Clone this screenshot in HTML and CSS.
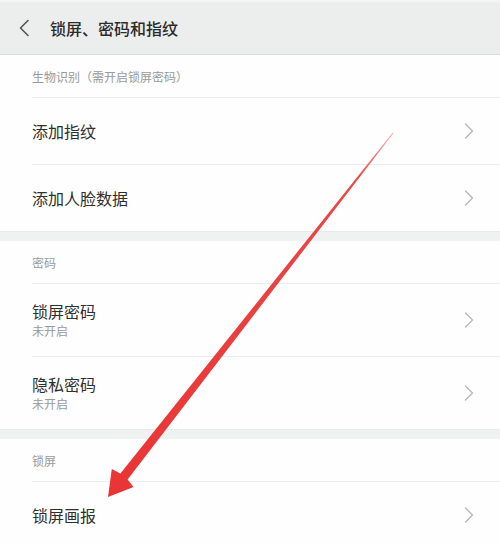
FILE: index.html
```html
<!DOCTYPE html>
<html lang="zh-CN">
<head>
<meta charset="utf-8">
<title>锁屏、密码和指纹</title>
<link rel="stylesheet" href="styles.css">
</head>
<body>
<div class="screen">
  <header class="topbar">
    <svg class="back" width="12" height="18" viewBox="0 0 12 18"><path d="M10 1.5 L2.5 9 L10 16.5" fill="none" stroke="#555" stroke-width="1.6" stroke-linecap="round" stroke-linejoin="round"/></svg>
    <span class="title">锁屏、密码和指纹</span>
  </header>

  <section class="section">
    <div class="sec-title">生物识别（需开启锁屏密码）</div>
    <div class="row">
      <div class="label"><div class="main">添加指纹</div></div>
      <svg class="chev" width="10" height="16" viewBox="0 0 10 16"><path d="M1.5 1 L8.5 8 L1.5 15" fill="none" stroke="#b8b8b8" stroke-width="1.4" stroke-linecap="round" stroke-linejoin="round"/></svg>
    </div>
    <div class="row last">
      <div class="label"><div class="main">添加人脸数据</div></div>
      <svg class="chev" width="10" height="16" viewBox="0 0 10 16"><path d="M1.5 1 L8.5 8 L1.5 15" fill="none" stroke="#b8b8b8" stroke-width="1.4" stroke-linecap="round" stroke-linejoin="round"/></svg>
    </div>
  </section>
  <div class="gap"></div>

  <section class="section">
    <div class="sec-title">密码</div>
    <div class="row tall">
      <div class="label"><div class="main">锁屏密码</div><div class="sub">未开启</div></div>
      <svg class="chev" width="10" height="16" viewBox="0 0 10 16"><path d="M1.5 1 L8.5 8 L1.5 15" fill="none" stroke="#b8b8b8" stroke-width="1.4" stroke-linecap="round" stroke-linejoin="round"/></svg>
    </div>
    <div class="row tall last">
      <div class="label"><div class="main">隐私密码</div><div class="sub">未开启</div></div>
      <svg class="chev" width="10" height="16" viewBox="0 0 10 16"><path d="M1.5 1 L8.5 8 L1.5 15" fill="none" stroke="#b8b8b8" stroke-width="1.4" stroke-linecap="round" stroke-linejoin="round"/></svg>
    </div>
  </section>
  <div class="gap"></div>

  <section class="section">
    <div class="sec-title">锁屏</div>
    <div class="row last">
      <div class="label"><div class="main">锁屏画报</div></div>
      <svg class="chev" width="10" height="16" viewBox="0 0 10 16"><path d="M1.5 1 L8.5 8 L1.5 15" fill="none" stroke="#b8b8b8" stroke-width="1.4" stroke-linecap="round" stroke-linejoin="round"/></svg>
    </div>
  </section>

  <svg class="arrow" width="500" height="544" viewBox="0 0 500 544">
    <defs>
      <linearGradient id="ag" gradientUnits="userSpaceOnUse" x1="393" y1="133" x2="108" y2="497">
        <stop offset="0" stop-color="#f4b0b0"/>
        <stop offset="0.12" stop-color="#ea4848"/>
        <stop offset="1" stop-color="#e93434"/>
      </linearGradient>
    </defs>
    <polygon fill="url(#ag)" points="393.4,133.3 127.6,479.4 133.5,487 108,497 111.8,469 120.4,473.6 392.6,132.7"/>
  </svg>
</div>
</body>
</html>
```

FILE: styles.css
```css
html, body {
  margin: 0;
  padding: 0;
  background: #fdfefd;
}
.screen {
  position: relative;
  width: 500px;
  height: 544px;
  overflow: hidden;
  font-family: "Noto Sans CJK SC", "Noto Sans", sans-serif;
  background: #fdfefd;
}
.topbar {
  height: 52px;
  border-top: 2px solid #f3f5f4;
  border-bottom: 1px solid #d9dddc;
  background: #eceeed;
  display: flex;
  align-items: center;
  padding-left: 18px;
}
.back {
  display: block;
  margin-right: 20px;
}
.title {
  font-size: 16px;
  font-weight: 500;
  color: #2c2c2c;
}
.section {
  background: #fdfefd;
  padding-left: 32px;
}
.sec-title {
  height: 42px;
  display: flex;
  align-items: center;
  font-size: 12px;
  color: #9a9a9a;
  border-bottom: 1px solid #e8ecea;
}
.row {
  height: 66px;
  display: flex;
  align-items: center;
  justify-content: space-between;
  padding-right: 26px;
  border-bottom: 1px solid #e8ecea;
}
.row.tall {
  height: 72px;
}
.row.last {
  border-bottom: none;
}
.main {
  font-size: 16px;
  line-height: 20px;
  color: #2f2f2f;
}
.sub {
  font-size: 12px;
  line-height: 16px;
  color: #9a9a9a;
  margin-top: 2px;
}
.chev {
  display: block;
}
.gap {
  height: 9px;
  background: #eef2f1;
  border-top: 1px solid #e6ebe9;
}
.arrow {
  position: absolute;
  left: 0;
  top: 0;
  pointer-events: none;
}
```
